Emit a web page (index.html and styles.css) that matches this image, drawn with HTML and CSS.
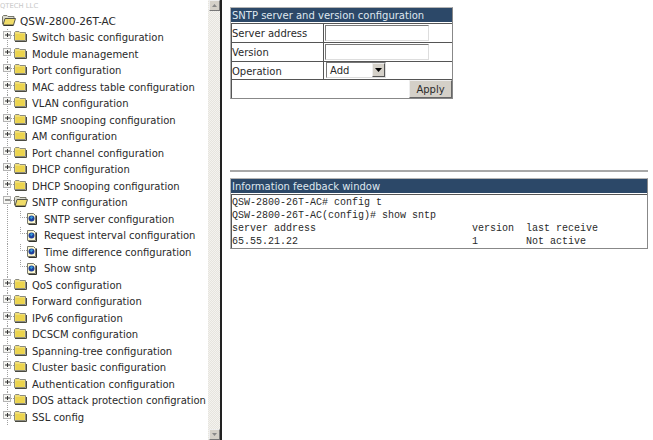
FILE: index.html
```html
<!DOCTYPE html>
<html>
<head>
<meta charset="utf-8">
<title>SNTP configuration</title>
<link rel="stylesheet" href="styles.css">
</head>
<body>
<svg class="defs" width="0" height="0">
  <defs>
    <symbol id="folder" viewBox="0 0 13 13">
      <path d="M.5 9.500V1.500L1.500.5h3.500l1 1h5.500v8z" fill="#f0de78" stroke="#8c8c80"/>
      <path d="M1.500 3h9v6h-9z" fill="#ecd44e"/>
      <path d="M1 10.500h11.500V3" fill="none" stroke="#4a4a40"/>
    </symbol>
    <symbol id="folder-open" viewBox="0 0 14 13">
      <path d="M.5 9V1.500L1.500.5h3.500l1 1h6V4" fill="#dcdcd0" stroke="#77776a"/>
      <path d="M1 10L3 3.500h10.500L11.500 10z" fill="#f0dc68" stroke="#55554a"/>
      <path d="M1.500 10.500h10" stroke="#33332c"/>
    </symbol>
    <symbol id="plus" viewBox="0 0 14 17">
      <path d="M7.500 0v2M7.500 11v6M11 6.500h3" stroke="#a0a0a0" stroke-dasharray="1 1" fill="none"/>
      <rect x="3.500" y="2.500" width="7" height="7" fill="#f6f6f2" stroke="#b4b4b4"/>
      <path d="M5 6h5M7.500 4v4" stroke="#333"/>
    </symbol>
    <symbol id="minus" viewBox="0 0 14 17">
      <path d="M7.500 0v2M7.500 11v6M11 6.500h3" stroke="#a0a0a0" stroke-dasharray="1 1" fill="none"/>
      <rect x="3.500" y="2.500" width="7" height="7" fill="#f6f6f2" stroke="#b4b4b4"/>
      <path d="M5 6h5" stroke="#333"/>
    </symbol>
    <symbol id="page" viewBox="0 0 10 12">
      <path d="M.5.500h6l2 2v8h-8z" fill="#fbf6cf" stroke="#77776a"/>
      <path d="M9.500 2.500v9H1.500" fill="none" stroke="#33332c"/>
      <circle cx="4.500" cy="5.500" r="3" fill="#1e3f9c"/>
      <path d="M3 4l2-1 1 1.500-2 2z" fill="#38a0d8"/>
    </symbol>
  </defs>
</svg>

<div class="window">
  <nav class="nav">
    <div class="vendor">QTECH LLC</div>
    <div class="root"><svg class="ico-root"><use href="#folder-open"/></svg><span>QSW-2800-26T-AC</span></div>
    <ul class="tree">
      <li class="row"><svg class="twist"><use href="#plus"/></svg><svg class="folder"><use href="#folder"/></svg><span>Switch basic configuration</span></li>
      <li class="row"><svg class="twist"><use href="#plus"/></svg><svg class="folder"><use href="#folder"/></svg><span>Module management</span></li>
      <li class="row"><svg class="twist"><use href="#plus"/></svg><svg class="folder"><use href="#folder"/></svg><span>Port configuration</span></li>
      <li class="row"><svg class="twist"><use href="#plus"/></svg><svg class="folder"><use href="#folder"/></svg><span>MAC address table configuration</span></li>
      <li class="row"><svg class="twist"><use href="#plus"/></svg><svg class="folder"><use href="#folder"/></svg><span>VLAN configuration</span></li>
      <li class="row"><svg class="twist"><use href="#plus"/></svg><svg class="folder"><use href="#folder"/></svg><span>IGMP snooping configuration</span></li>
      <li class="row"><svg class="twist"><use href="#plus"/></svg><svg class="folder"><use href="#folder"/></svg><span>AM configuration</span></li>
      <li class="row"><svg class="twist"><use href="#plus"/></svg><svg class="folder"><use href="#folder"/></svg><span>Port channel configuration</span></li>
      <li class="row"><svg class="twist"><use href="#plus"/></svg><svg class="folder"><use href="#folder"/></svg><span>DHCP configuration</span></li>
      <li class="row"><svg class="twist"><use href="#plus"/></svg><svg class="folder"><use href="#folder"/></svg><span>DHCP Snooping configuration</span></li>
      <li class="row"><svg class="twist"><use href="#minus"/></svg><svg class="folder-open"><use href="#folder-open"/></svg><span>SNTP configuration</span></li>
      <li class="row child"><svg class="branch" viewBox="0 0 27 17"><path d="M7.500 0v17M20.500 0v6.500H27" stroke="#a0a0a0" stroke-dasharray="1 1" fill="none"/></svg><svg class="page"><use href="#page"/></svg><span>SNTP server configuration</span></li>
      <li class="row child"><svg class="branch" viewBox="0 0 27 17"><path d="M7.500 0v17M20.500 0v6.500H27" stroke="#a0a0a0" stroke-dasharray="1 1" fill="none"/></svg><svg class="page"><use href="#page"/></svg><span>Request interval configuration</span></li>
      <li class="row child"><svg class="branch" viewBox="0 0 27 17"><path d="M7.500 0v17M20.500 0v6.500H27" stroke="#a0a0a0" stroke-dasharray="1 1" fill="none"/></svg><svg class="page"><use href="#page"/></svg><span>Time difference configuration</span></li>
      <li class="row child"><svg class="branch" viewBox="0 0 27 17"><path d="M7.500 0v17M20.500 0v6.500H27" stroke="#a0a0a0" stroke-dasharray="1 1" fill="none"/></svg><svg class="page"><use href="#page"/></svg><span>Show sntp</span></li>
      <li class="row"><svg class="twist"><use href="#plus"/></svg><svg class="folder"><use href="#folder"/></svg><span>QoS configuration</span></li>
      <li class="row"><svg class="twist"><use href="#plus"/></svg><svg class="folder"><use href="#folder"/></svg><span>Forward configuration</span></li>
      <li class="row"><svg class="twist"><use href="#plus"/></svg><svg class="folder"><use href="#folder"/></svg><span>IPv6 configuration</span></li>
      <li class="row"><svg class="twist"><use href="#plus"/></svg><svg class="folder"><use href="#folder"/></svg><span>DCSCM configuration</span></li>
      <li class="row"><svg class="twist"><use href="#plus"/></svg><svg class="folder"><use href="#folder"/></svg><span>Spanning-tree configuration</span></li>
      <li class="row"><svg class="twist"><use href="#plus"/></svg><svg class="folder"><use href="#folder"/></svg><span>Cluster basic configuration</span></li>
      <li class="row"><svg class="twist"><use href="#plus"/></svg><svg class="folder"><use href="#folder"/></svg><span>Authentication configuration</span></li>
      <li class="row"><svg class="twist"><use href="#plus"/></svg><svg class="folder"><use href="#folder"/></svg><span>DOS attack protection configration</span></li>
      <li class="row"><svg class="twist"><use href="#plus"/></svg><svg class="folder"><use href="#folder"/></svg><span>SSL config</span></li>
    </ul>
  </nav>

  <div class="scrollbar">
    <div class="sb-btn"><svg width="5" height="3" viewBox="0 0 5 3"><path d="M2.500 0L5 3H0z" fill="#888"/></svg></div>
    <div class="sb-btn"><svg width="5" height="3" viewBox="0 0 5 3"><path d="M2.500 3L5 0H0z" fill="#888"/></svg></div>
  </div>

  <main class="content">
    <section class="form-panel">
      <h2 class="bar">SNTP server and version configuration</h2>
      <div class="form-row"><label class="label">Server address</label><div class="field"><div class="input"></div></div></div>
      <div class="form-row"><label class="label">Version</label><div class="field"><div class="input"></div></div></div>
      <div class="form-row short"><label class="label">Operation</label><div class="field"><div class="select"><span>Add</span><span class="drop"><svg width="7" height="4" viewBox="0 0 7 4"><path d="M0 0h7L3.500 4z" fill="#000"/></svg></span></div></div></div>
      <div class="form-actions"><button class="apply" type="button">Apply</button></div>
    </section>

    <hr class="rule">

    <section class="feedback">
      <h2 class="bar">Information feedback window</h2>
      <div class="console">
        <div>QSW-2800-26T-AC# config t</div>
        <div>QSW-2800-26T-AC(config)# show sntp</div>
        <div class="cols"><span class="c1">server address</span><span class="c2">version</span><span>last receive</span></div>
        <div class="cols"><span class="c1">65.55.21.22</span><span class="c2">1</span><span>Not active</span></div>
      </div>
    </section>
  </main>
</div>
</body>
</html>
```
FILE: styles.css
```css
* { box-sizing: border-box; }
html, body { margin: 0; height: 100%; overflow: hidden; background: #fff; }
body { font-family: "DejaVu Sans", Verdana, sans-serif; font-size: 10px; color: #2a2a2a; }
.defs { position: absolute; }
.window { display: flex; height: 440px; width: 653px; }

.nav { width: 208px; flex: none; overflow: hidden; white-space: nowrap; }
.vendor { height: 13px; padding-top: 1px; font-size: 6.800px; line-height: 10px; color: #c8c8c8; }
.root { height: 16.500px; display: flex; align-items: center; padding-left: 2px; font-size: 10.500px; }
.ico-root { width: 14px; height: 13px; margin-right: 4px; }
.tree { list-style: none; margin: 0; padding: 0; }
.row { height: 16.500px; display: flex; align-items: center; }
.twist { width: 14px; height: 17px; flex: none; }
.folder { width: 13px; height: 13px; flex: none; margin-right: 5px; }
.folder-open { width: 14px; height: 13px; flex: none; margin-right: 4px; }
.branch { width: 27px; height: 17px; flex: none; }
.page { width: 10px; height: 12px; flex: none; margin-right: 7px; }

.scrollbar { width: 12px; flex: none; display: flex; flex-direction: column; justify-content: space-between; align-items: center; background: repeating-conic-gradient(#e6e4de 0 25%, #f4f3ef 0 50%) 0 0 / 2px 2px; }
.sb-btn { width: 11px; height: 11px; background: #d4d0c8; border: 1px solid; border-color: #eee #777 #777 #eee; display: flex; align-items: center; justify-content: center; }

.content { flex: 1; border-left: 2px solid #222; padding: 7px 5px 0 8px; }
.bar { margin: 0 0 1px; height: 14px; line-height: 16px; padding-left: 1px; font-size: 10px; font-weight: normal; background: #2c4868; color: #dfe7ef; }

.form-panel { width: 223px; border: 1px solid; border-color: #b4b4b4 #888 #888 #b4b4b4; }
.form-row { display: flex; height: 19px; border-top: 1px solid #555; border-left: 1px solid #555; }
.form-row.short { height: 18px; }
.label { width: 92px; display: flex; align-items: center; border-right: 1px solid #555; padding-top: 1px; }
.field { flex: 1; display: flex; align-items: center; padding-left: 1px; }
.short .field { align-items: flex-start; padding-left: 2px; }
.input { width: 104px; height: 16px; background: #fff; border: 1px solid; border-color: #777 #ddd #ddd #777; }
.select { width: 60px; height: 16px; border: 1px solid; border-color: #777 #ddd #ddd #777; display: flex; justify-content: space-between; align-items: center; padding-left: 3px; }
.drop { width: 13px; height: 14px; background: #d4d0c8; border: 1px solid; border-color: #eee #555 #555 #eee; display: flex; align-items: center; justify-content: center; }
.form-actions { height: 19px; display: flex; justify-content: flex-end; border-top: 1px solid #555; border-left: 1px solid #555; }
.apply { width: 43px; height: 18px; padding: 0; font: inherit; color: #2a2a2a; background: #d4d0c8; border: 1px solid; border-color: #eee #666 #666 #eee; }

.rule { margin: 71px 0 0; height: 2px; border: 0; background: #a8a8a8; }
.feedback { margin-top: 6px; border: 1px solid; border-color: #b4b4b4 #888 #888 #b4b4b4; }
.console { border-top: 1px solid #555; border-left: 1px solid #555; padding-top: 1px; font-family: "Liberation Mono", "Courier New", monospace; font-size: 10px; line-height: 13px; height: 54px; }
.cols { display: flex; }
.c1 { width: 240px; }
.c2 { width: 54px; }
```
